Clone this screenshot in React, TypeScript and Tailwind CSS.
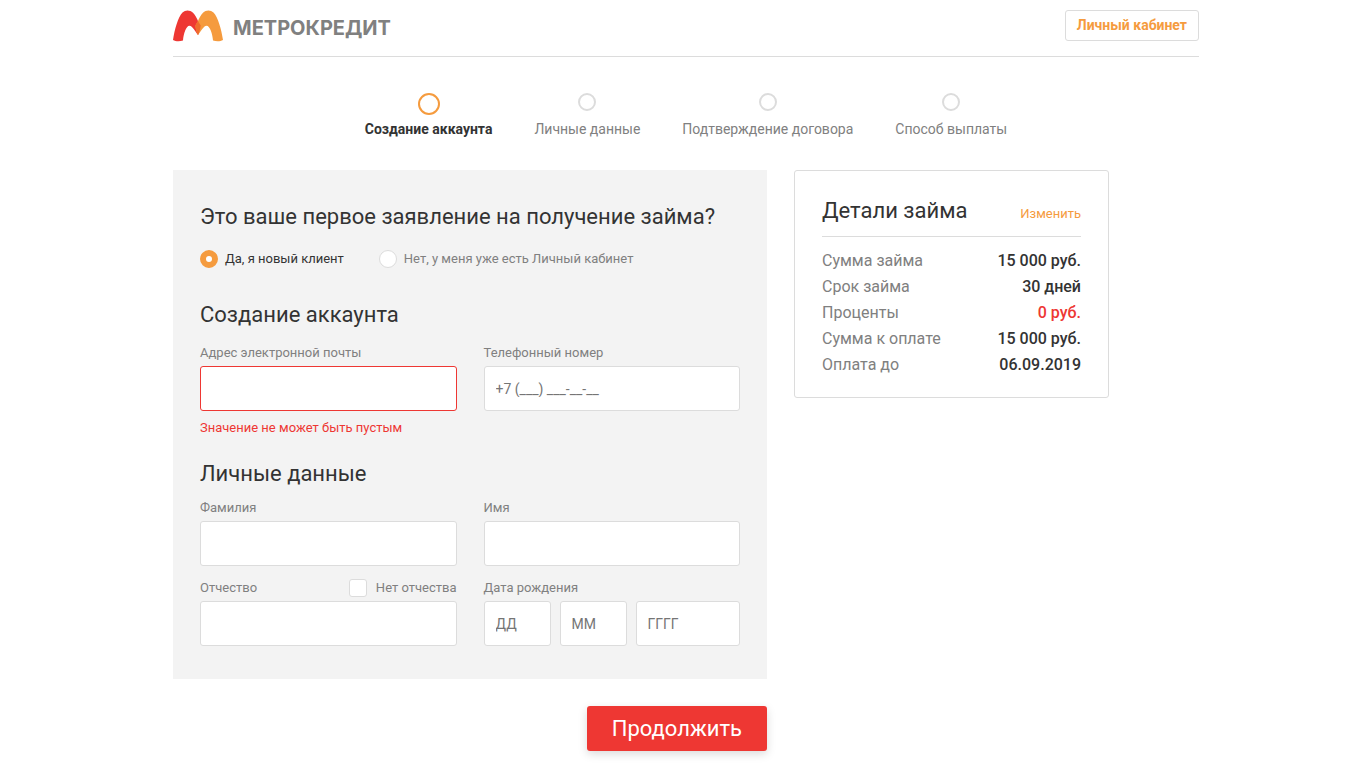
import { useState, type InputHTMLAttributes, type ReactNode } from "react";
import clsx from "clsx";

const steps = ["Создание аккаунта", "Личные данные", "Подтверждение договора", "Способ выплаты"];

const details = [
  { name: "Сумма займа", value: "15 000 руб." },
  { name: "Срок займа", value: "30 дней" },
  { name: "Проценты", value: "0 руб.", accent: true },
  { name: "Сумма к оплате", value: "15 000 руб." },
  { name: "Оплата до", value: "06.09.2019" },
];

function Logo() {
  return (
    <a href="#" className="flex items-center gap-[10px]">
      <svg width="50" height="32" viewBox="0 0 50 32" aria-hidden="true">
        <path
          d="M0 30C1.500 20 5 7 9.500 2.500C12.500 -.3 17 -.2 20 2.800C22.500 5.500 24 8.500 25 11L27.600 15.500C27.500 18.500 26.500 22 25 25C22.500 22 19.500 16 16.500 15.800C13 15.800 10.500 24 10 30.600C6.500 31.800 2.500 31.600 0 30Z"
          fill="#ee3733"
        />
        <path
          d="M50 30C48.500 20 45 7 40.500 2.500C37.500 -.3 33 -.2 30 2.800C27.500 5.500 26 8.500 25 11L22.400 15.500C22.500 18.500 23.500 22 25 25C27.500 22 30.500 16 33.500 15.800C37 15.800 39.500 24 40 30.600C43.500 31.800 47.500 31.600 50 30Z"
          fill="#f59b3e"
        />
        <path d="M25 11L22.400 15.500C22.500 18.500 23.500 22 25 25C26.500 22 27.500 18.500 27.600 15.500Z" fill="#ef6b2d" />
      </svg>
      <span className="pt-[3px] font-[Inter,sans-serif] text-[20px] leading-7 font-bold text-[#808080]">МЕТРОКРЕДИТ</span>
    </a>
  );
}

function TextInput({ invalid, className, ...props }: InputHTMLAttributes<HTMLInputElement> & { invalid?: boolean }) {
  return (
    <input
      type="text"
      aria-invalid={invalid}
      className={clsx(
        "h-[45px] w-full min-w-0 rounded-[3px] border bg-white px-[11px] text-sm text-[#333] outline-none placeholder:text-[#757575]",
        invalid ? "border-[#ee3733]" : "border-[#dcdcdc]",
        className,
      )}
      {...props}
    />
  );
}

function Label({ id, children }: { id: string; children: ReactNode }) {
  return (
    <label htmlFor={id} className="text-[13px] leading-5 text-[#808080]">
      {children}
    </label>
  );
}

function Field({ id, label, error, ...props }: { id: string; label: string; error?: string; placeholder?: string; type?: string }) {
  return (
    <div className="flex flex-col">
      <Label id={id}>{label}</Label>
      <TextInput id={id} className="mt-[3px]" invalid={Boolean(error)} {...props} />
      {error && <p className="mt-[7px] text-[13px] leading-5 text-[#ee3733]">{error}</p>}
    </div>
  );
}

function Heading({ children, className }: { children: ReactNode; className?: string }) {
  return <h2 className={clsx("text-[22px] leading-10 text-[#333]", className)}>{children}</h2>;
}

export default function App() {
  const [isNew, setIsNew] = useState(true);
  const [noPatronymic, setNoPatronymic] = useState(false);

  return (
    <div className="min-h-screen bg-white pr-4 pl-[25px] font-[Roboto,sans-serif] text-[#333]">
      <div className="mx-auto max-w-[1026px]">
        <header className="flex items-start justify-between border-b border-[#dcdcdc] pt-[10px] pb-[14px]">
          <Logo />
          <a href="#" className="rounded-[3px] border border-[#dcdcdc] px-[11px] py-[5px] text-sm leading-[19px] font-bold text-[#f59b3e]">
            Личный кабинет
          </a>
        </header>

        <ol className="mt-9 flex flex-wrap justify-center gap-[42px]">
          {steps.map((step, i) => (
            <li key={step} className="flex flex-col items-center">
              <span className="flex h-[26px] items-start">
                <span
                  className={clsx(
                    "rounded-full border-2",
                    i === 0 ? "size-[22px] border-[#f59b3e]" : "size-[18px] border-[#dcdcdc]",
                  )}
                />
              </span>
              <span className={clsx("text-sm leading-5", i === 0 ? "font-bold text-[#333]" : "text-[#808080]")}>{step}</span>
            </li>
          ))}
        </ol>

        <main className="mt-[31px] flex flex-wrap items-start gap-[27px]">
          <form className="w-full max-w-[594px]" onSubmit={(e) => e.preventDefault()}>
            <div className="bg-[#f3f3f3] px-[27px] pt-[27px] pb-[33px]">
              <Heading>Это ваше первое заявление на получение займа?</Heading>
              <div role="radiogroup" aria-label="Первое заявление" className="mt-3 flex gap-[35px] text-[13px] leading-5">
                {[
                  { text: "Да, я новый клиент", value: true },
                  { text: "Нет, у меня уже есть Личный кабинет", value: false },
                ].map(({ text, value }) => (
                  <label key={text} className={clsx("flex items-center gap-[7px]", isNew === value ? "text-[#333]" : "text-[#808080]")}>
                    <input
                      type="radio"
                      name="client"
                      checked={isNew === value}
                      onChange={() => setIsNew(value)}
                      className="size-[18px] appearance-none rounded-full border border-[#dcdcdc] bg-white checked:border-[6px] checked:border-[#f59b3e]"
                    />
                    {text}
                  </label>
                ))}
              </div>

              <Heading className="mt-[26px]">Создание аккаунта</Heading>
              <div className="mt-2 grid grid-cols-2 gap-[27px]">
                <Field id="email" type="email" label="Адрес электронной почты" error="Значение не может быть пустым" />
                <Field id="phone" type="tel" label="Телефонный номер" placeholder="+7 (___) ___-__-__" />
              </div>

              <Heading className="mt-4">Личные данные</Heading>
              <div className="mt-1 grid grid-cols-2 gap-x-[27px] gap-y-3">
                <Field id="surname" label="Фамилия" />
                <Field id="name" label="Имя" />
                <div>
                  <div className="flex h-5 items-center justify-between">
                    <Label id="patronymic">Отчество</Label>
                    <label className="flex items-center gap-[9px] text-[13px] leading-5 text-[#808080]">
                      <input
                        type="checkbox"
                        checked={noPatronymic}
                        onChange={(e) => setNoPatronymic(e.target.checked)}
                        className="size-[18px] appearance-none rounded-[3px] border border-[#dcdcdc] bg-white checked:bg-[#f59b3e]"
                      />
                      Нет отчества
                    </label>
                  </div>
                  <TextInput id="patronymic" className="mt-[3px]" disabled={noPatronymic} />
                </div>
                <div role="group" aria-labelledby="birth">
                  <div id="birth" className="text-[13px] leading-5 text-[#808080]">
                    Дата рождения
                  </div>
                  <div className="mt-[3px] grid grid-cols-[67px_67px_1fr] gap-[9px]">
                    <TextInput aria-label="День" placeholder="ДД" />
                    <TextInput aria-label="Месяц" placeholder="ММ" />
                    <TextInput aria-label="Год" placeholder="ГГГГ" />
                  </div>
                </div>
              </div>
            </div>
            <div className="mt-[27px] flex justify-end pb-[13px]">
              <button
                type="submit"
                className="rounded-[3px] bg-[#ee3733] px-[25px] pt-px text-[22px] leading-[44px] text-white shadow-[0_3px_10px_rgba(0,0,0,0.15)]"
              >
                Продолжить
              </button>
            </div>
          </form>

          <aside className="w-full max-w-[315px] rounded-[3px] border border-[#dcdcdc] px-[27px] pt-5 pb-[19px]">
            <div className="flex items-baseline justify-between border-b border-[#dcdcdc] pb-[5px]">
              <Heading>Детали займа</Heading>
              <a href="#" className="text-[13px] leading-5 text-[#f59b3e]">
                Изменить
              </a>
            </div>
            <dl className="mt-[11px]">
              {details.map(({ name, value, accent }) => (
                <div key={name} className="flex justify-between leading-[26px]">
                  <dt className="text-[#808080]">{name}</dt>
                  <dd className={clsx("font-medium", accent && "text-[#ee3733]")}>{value}</dd>
                </div>
              ))}
            </dl>
          </aside>
        </main>
      </div>
    </div>
  );
}
